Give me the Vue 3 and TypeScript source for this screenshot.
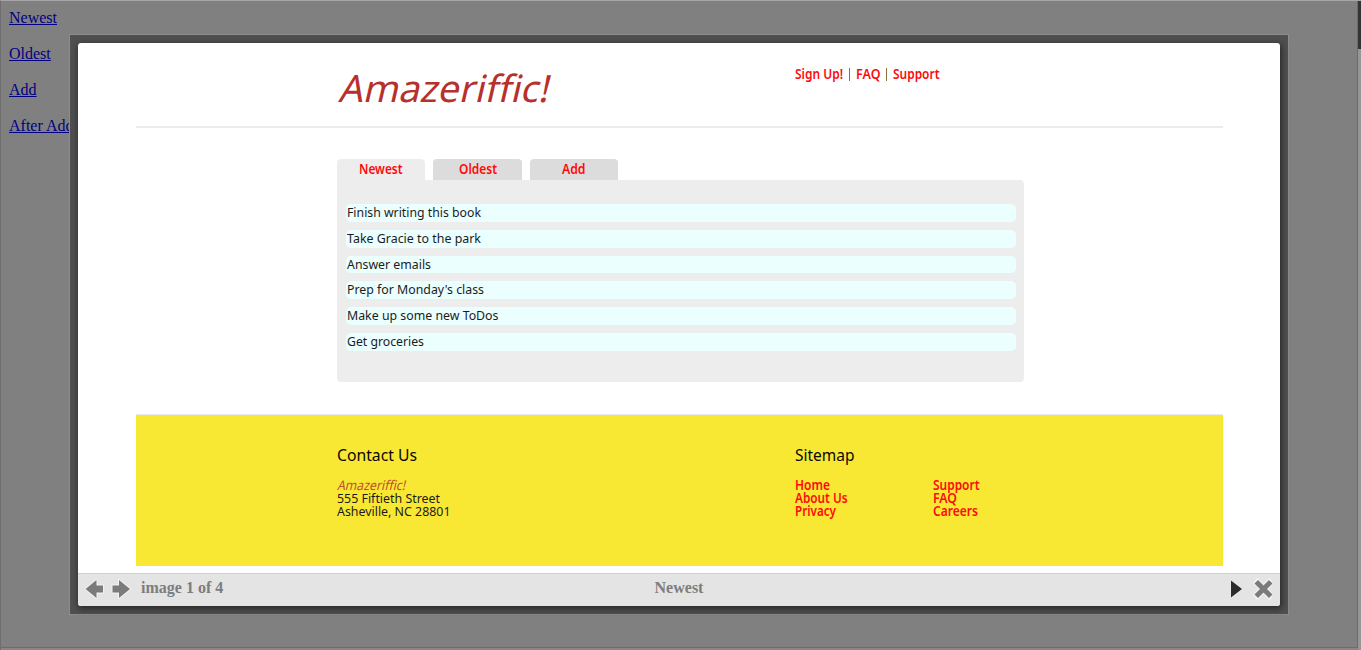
<script setup lang="ts">
import { h, type FunctionalComponent } from 'vue'

interface Label { text: string; w: number }

// One line of real text fitted to a fixed advance width; its baseline lies 14px below its top.
const FitText: FunctionalComponent<Label> = (p) =>
  h('svg', { class: 'fit', width: p.w, height: 20 }, [
    h('text', { x: 0, y: 14, textLength: p.w, lengthAdjust: 'spacingAndGlyphs' }, p.text),
  ])
FitText.props = ['text', 'w']

const pageLinks: string[] = ['Newest', 'Oldest', 'Add', 'After Add']
const tabs: Label[] = [
  { text: 'Newest', w: 43.5 },
  { text: 'Oldest', w: 38 },
  { text: 'Add', w: 23.5 },
]
const todos: Label[] = [
  { text: 'Finish writing this book', w: 134 },
  { text: 'Take Gracie to the park', w: 134 },
  { text: 'Answer emails', w: 84 },
  { text: "Prep for Monday's class", w: 137 },
  { text: 'Make up some new ToDos', w: 151.5 },
  { text: 'Get groceries', w: 77 },
]
const sitemap: Label[][] = [
  [{ text: 'Home', w: 35 }, { text: 'About Us', w: 52.5 }, { text: 'Privacy', w: 41 }],
  [{ text: 'Support', w: 46.5 }, { text: 'FAQ', w: 24 }, { text: 'Careers', w: 45 }],
]
</script>

<template>
  <div class="page">
    <nav class="page-links">
      <a v-for="l in pageLinks" :key="l" href="#">{{ l }}</a>
    </nav>
    <div class="scroll"><div class="thumb"></div></div>

    <div class="popup">
      <div class="frame">
        <div class="site">
          <header>
            <h1 class="logo"><FitText class="slant" text="Amazeriffic!" :w="210" /></h1>
            <nav class="top-nav red">
              <FitText text="Sign Up!" :w="48" />
              <i class="sep"></i>
              <FitText text="FAQ" :w="24.5" />
              <i class="sep"></i>
              <FitText text="Support" :w="46.5" />
            </nav>
          </header>
          <main>
            <div class="tabs red">
              <div v-for="(t, i) in tabs" :key="t.text" class="tab" :class="{ active: i === 0 }">
                <FitText :text="t.text" :w="t.w" />
              </div>
            </div>
            <div class="panel">
              <div v-for="t in todos" :key="t.text" class="todo"><FitText :text="t.text" :w="t.w" /></div>
            </div>
          </main>
          <footer>
            <section class="contact">
              <h2><FitText text="Contact Us" :w="80" /></h2>
              <div class="lines">
                <em><FitText class="slant" text="Amazeriffic!" :w="68" /></em>
                <FitText text="555 Fiftieth Street" :w="103" />
                <FitText text="Asheville, NC 28801" :w="113.5" />
              </div>
            </section>
            <section>
              <h2><FitText text="Sitemap" :w="59.5" /></h2>
              <div class="cols red">
                <div v-for="(c, i) in sitemap" :key="i" class="lines">
                  <FitText v-for="l in c" :key="l.text" :text="l.text" :w="l.w" />
                </div>
              </div>
            </section>
          </footer>
        </div>
        <div class="bar">
          <div class="side">
            <svg class="arrows" width="48" height="22" viewBox="0 0 48 22">
              <g fill="#7b7b7b" stroke="#f3f3f3" stroke-width="2" paint-order="stroke" stroke-linejoin="round">
                <path d="M1.5 11L12.5 2V7.5H19V14.5H12.5V20Z" />
                <path d="M46 11L35 2V7.5H28.5V14.5H35V20Z" />
              </g>
            </svg>
            <span>image 1 of 4</span>
          </div>
          <span class="title">Newest</span>
          <div class="side right">
            <svg width="44" height="22" viewBox="0 0 44 22">
              <path d="M3 2.5L14 11L3 19.5Z" fill="#2b2b2b" stroke="#f0f0f0" stroke-width="1" paint-order="stroke" />
              <path d="M29.5 5L41.5 17M41.5 5L29.5 17" stroke="#f3f3f3" stroke-width="7" stroke-linecap="square" />
              <path d="M30 5.5L41 16.5M41 5.5L30 16.5" stroke="#7b7b7b" stroke-width="5" stroke-linecap="square" />
            </svg>
          </div>
        </div>
      </div>
    </div>
  </div>
</template>

<style>
body { overflow: hidden; }
.fit { display: block; flex: none; overflow: visible; fill: currentColor; }
.fit.slant { transform: skewX(-13deg); transform-origin: 0 14px; }
</style>

<style scoped>
* { box-sizing: border-box; }
.page {
  position: relative; width: 1361px; height: 650px; background: #808080; overflow: hidden;
  border-top: 1px solid #a6a6a6; border-left: 1px solid #6e6e6e;
  font: 16px 'Liberation Serif', serif;
}
.page::after {
  content: ''; position: absolute; left: 0; right: 3px; bottom: 0; height: 2px;
  background: #8a8686; border-top: 1px solid #6c6c6c;
}
.page-links { padding: 8px 0 0 8px; display: flex; flex-direction: column; gap: 18px; align-items: flex-start; }
.page-links a { color: #000080; line-height: 18px; text-decoration: underline; }
.scroll { position: absolute; right: 0; top: 0; width: 4px; height: 100%; background: #969696; border-left: 1px solid #6c6c6c; }
.thumb { height: 48px; background: #343434; }
.popup {
  position: absolute; left: 68px; top: 33px; width: 1220px; height: 581px;
  background: #505050; border: 1px solid #8c8c8c; padding: 8px 7px 7px 8px;
}
.frame {
  width: 1202px; height: 563px; background: #fff; border-radius: 3px; overflow: hidden;
  box-shadow: 1px 2px 6px 1px #292929; display: flex; flex-direction: column;
}
.site { height: 530px; width: 1087px; margin-left: 58px; font: 13.4px 'Noto Sans', 'Open Sans', sans-serif; color: #1b1b1b; }
header { height: 85px; border-bottom: 2px solid #ececec; display: flex; padding-left: 202px; }
h1, h2 { margin: 0; font-weight: 400; }
.logo { font-size: 37.5px; color: #b7312c; width: 456.5px; padding-top: 45px; }
.red { color: #ff0a0a; font-weight: 600; }
.top-nav { display: flex; padding-top: 22px; }
.sep { width: 1px; height: 13px; margin: 3px 6px 0; background: #887038; }
main { padding: 31.4px 0 0 201px; height: 286px; }
.tabs { display: flex; gap: 8px; }
.tab { width: 88.4px; height: 21px; background: #dcdcdc; border-radius: 4px 4px 0 0; display: flex; justify-content: center; }
.tab .fit { position: relative; top: 0.6px; }
.tab.active, .panel { background: #ededed; }
.panel {
  width: 687px; height: 202px; border-radius: 0 4px 4px 4px; padding: 24px 8px 0 9px;
  display: flex; flex-direction: column; gap: 8px;
}
.todo { height: 17.7px; flex: none; background: #ebffff; border-radius: 5px; padding-left: 1px; }
.todo .fit { position: relative; top: -1.2px; }
footer { height: 152px; background: #f9e833; border-top: 1px solid #e8e8f0; padding: 32px 0 0 201px; display: flex; }
.contact { width: 457.5px; }
h2 { font-size: 16px; color: #080808; }
.lines { padding-top: 9px; }
.lines :deep(.fit) { height: 13px; }
.lines em { display: block; color: #bd5030; font-style: normal; }
.cols { display: flex; }
.cols .lines { width: 138.3px; }
.bar {
  height: 33px; background: #e4e4e4; border-top: 1px solid #cfcfcf; padding: 0 8px 4px 6px;
  display: flex; align-items: center; justify-content: space-between; color: #7d7d7d; font-weight: 700;
}
.title { margin: 0 -1px 0 1px; }
.side { flex: 1; display: flex; align-items: center; gap: 9px; }
.right { justify-content: flex-end; }
.side svg { position: relative; top: 1px; }
</style>
